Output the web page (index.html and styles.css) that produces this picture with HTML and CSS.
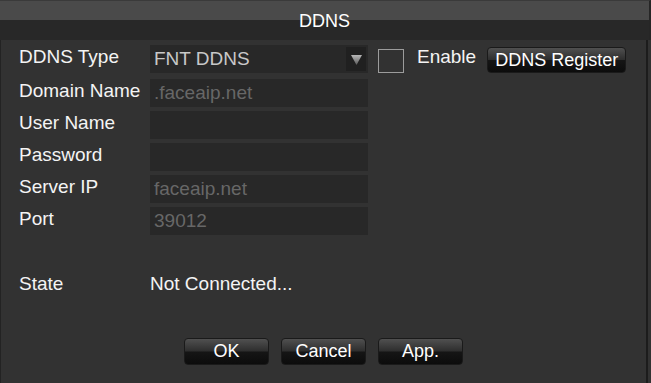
FILE: index.html
```html
<!DOCTYPE html>
<html lang="en">
<head>
    <meta charset="UTF-8">
    <title>DDNS</title>
    <link rel="stylesheet" href="styles.css">
</head>
<body>
    <div class="dialog">
        <!-- Title -->
        <header class="title-bar">DDNS</header>

        <!-- Form -->
        <main class="dialog-body">
            <div class="row row-first">
                <span class="label">DDNS Type</span>
                <div class="field select">
                    <span>FNT DDNS</span>
                    <span class="arrow-box">
                        <svg width="11" height="10" viewBox="0 0 11 10">
                            <defs>
                                <linearGradient id="arrowGrad" x1="0" y1="0" x2="0" y2="1">
                                    <stop offset="0" stop-color="#b8b8b8"/>
                                    <stop offset="1" stop-color="#5a5a5a"/>
                                </linearGradient>
                            </defs>
                            <polygon points="0,0 11,0 5.5,10" fill="url(#arrowGrad)"/>
                        </svg>
                    </span>
                </div>
                <span class="checkbox"></span>
                <span class="label enable">Enable</span>
                <button class="btn btn-register">DDNS Register</button>
            </div>
            <div class="row">
                <span class="label">Domain Name</span>
                <div class="field disabled">.faceaip.net</div>
            </div>
            <div class="row">
                <span class="label">User Name</span>
                <div class="field"></div>
            </div>
            <div class="row">
                <span class="label">Password</span>
                <div class="field"></div>
            </div>
            <div class="row">
                <span class="label">Server IP</span>
                <div class="field disabled">faceaip.net</div>
            </div>
            <div class="row">
                <span class="label">Port</span>
                <div class="field disabled">39012</div>
            </div>

            <div class="row row-state">
                <span class="label">State</span>
                <span class="state-text">Not Connected...</span>
            </div>

            <div class="actions">
                <button class="btn btn-action">OK</button>
                <button class="btn btn-action">Cancel</button>
                <button class="btn btn-action">App.</button>
            </div>
        </main>
    </div>
</body>
</html>
```

FILE: styles.css
```css
* {
    margin: 0;
    padding: 0;
    box-sizing: border-box;
}

body {
    font-family: 'Liberation Sans', Arial, sans-serif;
    background: #323232;
    color: #f2f2f2;
}

.dialog {
    width: 651px;
    height: 383px;
    background: #323232;
    display: flex;
    flex-direction: column;
    overflow: hidden;
}

/* Title bar */
.title-bar {
    height: 40px;
    padding-top: 1px;
    border-top: 1px solid #3a3a3a;
    border-right: 2px solid #262626;
    background: linear-gradient(#4a4a4a 0, #4a4a4a 50%, #282828 50%, #282828 100%);
    color: #fff;
    font-size: 18px;
    line-height: 38px;
    text-align: center;
}

/* Body */
.dialog-body {
    flex: 1;
    padding: 5px 0 0 18px;
    border-left: 1px solid #232323;
    border-right: 2px solid #1c1c1c;
    margin-right: 3px;
}

.row {
    display: flex;
    align-items: flex-start;
    height: 28px;
    margin-bottom: 4px;
}

.row-first {
    margin-bottom: 6px;
}

.label {
    width: 131px;
    font-size: 19px;
    line-height: 24px;
    color: #f4f4f4;
    white-space: nowrap;
}

.field {
    width: 218px;
    height: 28px;
    background: #282828;
    padding-left: 4px;
    font-size: 19px;
    line-height: 28px;
    color: #c8c8c8;
}

.field.disabled {
    color: #676767;
}

.select {
    display: flex;
    justify-content: space-between;
    align-items: center;
    padding-right: 2px;
}

.arrow-box {
    width: 20px;
    height: 24px;
    background: #202020;
    display: flex;
    align-items: center;
    justify-content: center;
    padding-top: 1px;
}

.checkbox {
    width: 26px;
    height: 24px;
    margin: 4px 0 0 10px;
    border: 1px solid #9c9c9c;
}

.label.enable {
    width: auto;
    margin-left: 13px;
}

/* Buttons */
.btn {
    font-family: 'Liberation Sans', Arial, sans-serif;
    font-size: 18px;
    color: #fff;
    border: 1px solid #1a1a1a;
    border-radius: 4px;
    background: linear-gradient(#505050 0, #2e2e2e 48%, #151515 52%, #0c0c0c 100%);
    cursor: pointer;
}

.btn-register {
    width: 139px;
    height: 26px;
    margin: 2px 0 0 11px;
    line-height: 24px;
}

.row-state {
    margin-top: 37px;
    height: 24px;
}

.state-text {
    font-size: 19px;
    line-height: 24px;
    color: #f4f4f4;
}

.actions {
    display: flex;
    justify-content: center;
    gap: 12px;
    margin-top: 42px;
    padding-right: 18px;
}

.btn-action {
    width: 85px;
    height: 27px;
    line-height: 25px;
}
```
